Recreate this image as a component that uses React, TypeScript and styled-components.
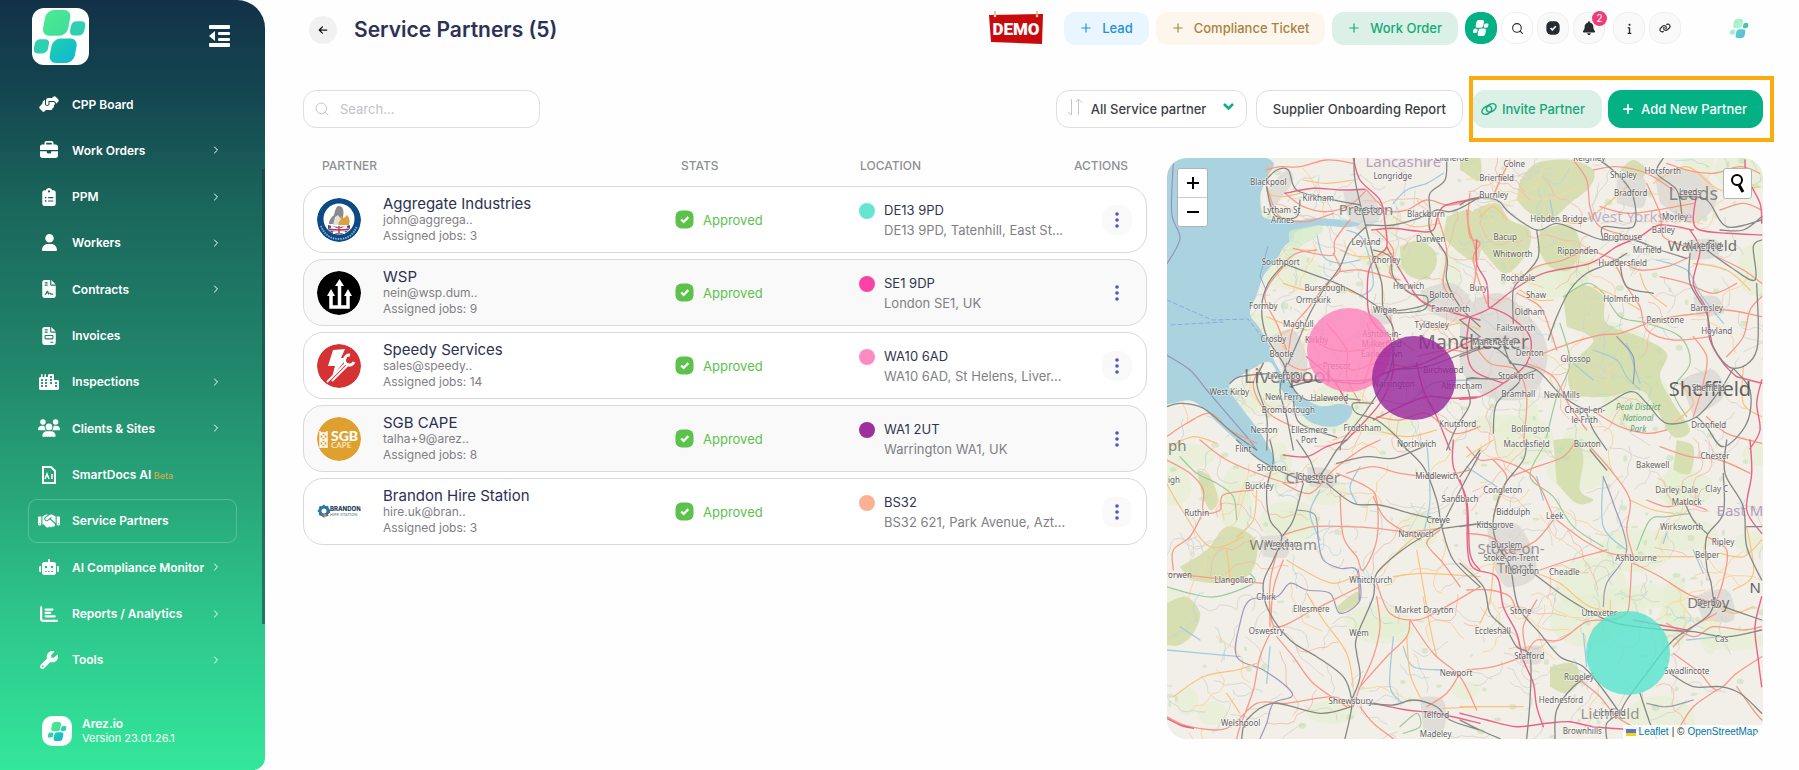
import React from "react";
import styled, { createGlobalStyle } from "styled-components";
import {
  FaArrowLeft, FaBell, FaBriefcase, FaChartBar, FaCity, FaClipboardList, FaFileContract,
  FaFileInvoice, FaHandshake, FaHandshakeAngle, FaInfo, FaLink, FaRobot, FaUser, FaUsers, FaWrench,
} from "react-icons/fa6";
import { ChevronRight, Plus, Search } from "lucide-react";

const Global = createGlobalStyle`
  *, *::before, *::after { box-sizing: border-box; }
  body { margin: 0; background: #fefefe; color: #2b3152; font-family: "Inter", "Liberation Sans", sans-serif; font-size: 13px; }
  button, input, select { font: inherit; color: inherit; }
  button { cursor: pointer; padding: 0; border: 0; background: none; }
  a { color: inherit; text-decoration: none; }
  svg { display: block; flex: none; }
`;

/* ---------- shell ---------- */

const Shell = styled.div`
  display: flex;
  min-height: 100vh;
`;

const Sidebar = styled.aside`
  position: relative;
  flex: none;
  display: flex;
  flex-direction: column;
  width: 265px;
  padding: 8px 28px 24px;
  color: #fff;
  border-radius: 0 28px 12px 0;
  background: linear-gradient(180deg, #123148 0%, #144650 12%, #1a655b 26%, #21876b 48%, #28a77a 65%, #2dc48a 79%, #33e79b 100%);
`;

const ScrollThumb = styled.span`
  position: absolute;
  top: 22%;
  bottom: 19%;
  right: 0;
  width: 3px;
  background: rgba(20, 60, 60, 0.55);
`;

const SideTop = styled.div`
  display: flex;
  align-items: center;
  justify-content: space-between;
  padding: 0 7px 0 4px;
  margin-bottom: 17px;
`;

const LogoTile = styled.span<{ $size: number; $radius: number }>`
  display: grid;
  place-items: center;
  flex: none;
  width: ${(p) => p.$size}px;
  height: ${(p) => p.$size}px;
  border-radius: ${(p) => p.$radius}px;
  background: #fff;
`;

const Nav = styled.nav`
  flex: 1;
  display: flex;
  flex-direction: column;
  justify-content: space-between;
`;

const NavItem = styled.a<{ $active?: boolean }>`
  display: grid;
  grid-template-columns: 22px 1fr 12px;
  align-items: center;
  column-gap: 12px;
  height: 44px;
  padding: 0 14px 0 9px;
  border: 1px solid ${(p) => (p.$active ? "rgba(255,255,255,.22)" : "transparent")};
  border-radius: 9px;
  font-size: 12px;
  font-weight: 600;
  white-space: nowrap;
`;

const NavIcon = styled.span`
  display: grid;
  place-items: center;
`;

const NavLabel = styled.span`
  width: 0;
`;

const Beta = styled.small`
  font-size: 9px;
  font-weight: 500;
  color: #d9ab45;
`;

const SideFoot = styled.div`
  display: flex;
  align-items: center;
  gap: 10px;
  margin-top: 34px;
  padding-left: 14px;
  font-size: 11px;
  line-height: 15px;
`;

const FootName = styled.strong`
  display: block;
  font-size: 12px;
  font-weight: 600;
`;

const Main = styled.main`
  flex: 1;
  min-width: 0;
  display: flex;
  flex-direction: column;
  padding: 11px 36px 31px 38px;
`;

/* ---------- header ---------- */

const Header = styled.header`
  display: flex;
  align-items: center;
  height: 34px;
  margin-bottom: 45px;
`;

const PageHeading = styled.div`
  flex: 1;
  display: flex;
  align-items: center;
  gap: 17px;
  padding: 3px 0 0 6px;
`;

const BackButton = styled.button`
  display: grid;
  place-items: center;
  width: 28px;
  height: 28px;
  border-radius: 50%;
  background: #f1f1f1;
  color: #111;
`;

const Title = styled.h1`
  margin: 0;
  font-size: 21px;
  line-height: 28px;
  font-weight: 600;
  color: #2c3157;
`;

const HeaderGroup = styled.div<{ $gap: number }>`
  display: flex;
  align-items: center;
  gap: ${(p) => p.$gap}px;
`;

const tones = {
  blue: ["#e9f5ff", "#1e90dc"],
  sand: ["#fdf6ed", "#a9823f"],
  green: ["#dbf0e6", "#10ab79"],
};

const Pill = styled.button<{ $tone: keyof typeof tones }>`
  display: flex;
  align-items: center;
  gap: 9px;
  height: 33px;
  padding: 0 16px 0 15px;
  border-radius: 12px;
  font-weight: 500;
  white-space: nowrap;
  background: ${(p) => tones[p.$tone][0]};
  color: ${(p) => tones[p.$tone][1]};
`;

const IconButton = styled.button<{ $kind?: "brand" | "plain"; $apart?: boolean }>`
  position: relative;
  display: grid;
  place-items: center;
  width: 32px;
  height: 32px;
  margin-left: ${(p) => (p.$apart ? 4 : 0)}px;
  border-radius: 14px;
  border: 1px solid ${(p) => (p.$kind === "brand" ? "#04b184" : "#efefef")};
  background: ${(p) => (p.$kind === "brand" ? "#04b184" : p.$kind === "plain" ? "#fff" : "#f9f9f9")};
  color: #262b2f;
`;

const Badge = styled.span`
  position: absolute;
  top: -2px;
  right: -3px;
  width: 15px;
  height: 15px;
  border-radius: 50%;
  background: #ee3d74;
  color: #fff;
  font-size: 10px;
  line-height: 15px;
`;

const UserMark = styled.a`
  margin: 0 14px 0 49px;
`;

/* ---------- toolbar ---------- */

const Toolbar = styled.div`
  display: flex;
  align-items: center;
  height: 38px;
  margin-bottom: 30px;
`;

const SearchBox = styled.label`
  display: flex;
  align-items: center;
  gap: 10px;
  width: 237px;
  height: 38px;
  padding: 0 10px;
  border: 1px solid #dedede;
  border-radius: 13px;
  background: #fff;
  color: #c4c4c8;
`;

const SearchInput = styled.input`
  flex: 1;
  min-width: 0;
  border: 0;
  padding: 0;
  outline: 0;
  background: transparent;
  color: #333;
  &::placeholder { color: #c2c2c6; opacity: 1; }
`;

const ToolGroup = styled.div`
  display: flex;
  gap: 9px;
  margin-left: auto;
`;

const SelectBox = styled.label`
  position: relative;
  display: block;
`;

const SelectLead = styled.span`
  position: absolute;
  left: 11px;
  top: 8px;
  pointer-events: none;
`;

const SelectChevron = styled.span`
  position: absolute;
  right: 13px;
  top: 13px;
  pointer-events: none;
`;

const FilterSelect = styled.select`
  appearance: none;
  width: 191px;
  height: 38px;
  padding: 0 30px 0 34px;
  border: 1px solid #dedede;
  border-radius: 13px;
  background: #fff;
  font-weight: 500;
  color: #3b3f46;
`;

const ToolButton = styled.button<{ $look: "outline" | "soft" | "solid" }>`
  display: flex;
  align-items: center;
  gap: ${(p) => (p.$look === "soft" ? 5 : 6)}px;
  height: 38px;
  padding: ${(p) => (p.$look === "soft" ? "0 16px 0 8px" : p.$look === "solid" ? "0 15px 0 12px" : "0 16px")};
  border-radius: 13px;
  font-weight: 500;
  white-space: nowrap;
  border: 1px solid ${(p) => ({ outline: "#dedede", soft: "#dbf0e6", solid: "#04b184" })[p.$look]};
  background: ${(p) => ({ outline: "#fff", soft: "#dbf0e6", solid: "#04b184" })[p.$look]};
  color: ${(p) => ({ outline: "#3b3f46", soft: "#16a67a", solid: "#fff" })[p.$look]};
`;

const Highlighted = styled.div`
  position: relative;
  display: flex;
  gap: 6px;
  &::after {
    content: "";
    position: absolute;
    inset: -14px -11px -14px -3px;
    border: 4px solid #fbab0c;
    pointer-events: none;
  }
`;

/* ---------- table ---------- */

const Content = styled.div`
  flex: 1;
  display: grid;
  grid-template-columns: minmax(0, 844fr) minmax(0, 596fr);
  gap: 20px;
`;

const Table = styled.table`
  display: block;
`;

const Head = styled.thead`
  display: block;
`;

const HeadRow = styled.tr`
  display: grid;
  grid-template-columns: 359fr 179fr 195fr 92px;
  height: 28px;
  padding: 0 0 0 19px;
`;

const HeadCell = styled.th<{ $end?: boolean }>`
  padding: 0;
  padding-right: ${(p) => (p.$end ? 19 : 0)}px;
  text-align: ${(p) => (p.$end ? "right" : "left")};
  font-size: 12px;
  line-height: 16px;
  font-weight: 500;
  color: #8e9094;
`;

const Body = styled.tbody`
  display: grid;
  gap: 6px;
`;

const Row = styled.tr<{ $shade: boolean }>`
  display: grid;
  grid-template-columns: 358fr 184fr 195fr 92px;
  align-items: center;
  height: 67px;
  padding-left: 13px;
  border: 1px solid #d9d9da;
  border-radius: 20px;
  background: ${(p) => (p.$shade ? "#f9f9f9" : "#fff")};
`;

const Cell = styled.td<{ $end?: boolean }>`
  display: flex;
  align-items: center;
  justify-content: ${(p) => (p.$end ? "flex-end" : "flex-start")};
  gap: 9px;
  min-width: 0;
  padding: 0 ${(p) => (p.$end ? 14 : 0)}px 0 0;
`;

const Avatar = styled.span`
  flex: none;
  width: 44px;
  height: 44px;
  margin-right: 13px;
  border-radius: 50%;
  overflow: hidden;
`;

const PartnerName = styled.div`
  font-size: 15px;
  line-height: 17px;
  color: #2b3152;
`;

const Muted = styled.div<{ $size: number; $line: number }>`
  font-size: ${(p) => p.$size}px;
  line-height: ${(p) => p.$line}px;
  color: #7f8084;
  white-space: nowrap;
`;

const Approved = styled.span`
  color: #5cc24c;
  line-height: 20px;
`;

const Dot = styled.span<{ $color: string }>`
  flex: none;
  align-self: flex-start;
  width: 16px;
  height: 16px;
  margin-top: 3px;
  border-radius: 50%;
  background: ${(p) => p.$color};
`;

const Place = styled.div`
  line-height: 20px;
  color: #2f3550;
`;

const MoreButton = styled.button`
  display: grid;
  place-items: center;
  width: 30px;
  height: 30px;
  border-radius: 12px;
  background: #f9f9f9;
`;

/* ---------- map ---------- */

const MapPanel = styled.section`
  position: relative;
  min-height: 400px;
  border-radius: 20px;
  overflow: hidden;
  background: #f1efe6;
`;

const MapSvg = styled.svg`
  position: absolute;
  inset: 0;
  width: 100%;
  height: 100%;
`;

const ZoomControl = styled.div`
  position: absolute;
  top: 10px;
  left: 10px;
  width: 31px;
  border: 1px solid #a9b4b4;
  border-radius: 3px;
  background: #fff;
  overflow: hidden;
`;

const ZoomButton = styled.button`
  display: grid;
  place-items: center;
  width: 100%;
  height: 28px;
  color: #000;
  & + & { border-top: 1px solid #ccc; height: 29px; }
`;

const MapSearch = styled.button`
  position: absolute;
  top: 10px;
  right: 11px;
  display: grid;
  place-items: center;
  width: 29px;
  height: 31px;
  border: 1px solid #b5b5b0;
  border-radius: 3px;
  background: #fff;
`;

const Attribution = styled.div`
  position: absolute;
  right: 0;
  bottom: 0;
  display: flex;
  align-items: center;
  gap: 3px;
  height: 14px;
  padding: 0 5px 0 3px;
  background: rgba(255, 255, 255, 0.8);
  font: 10px/14px "Liberation Sans", sans-serif;
  color: #333;
`;

const AttributionLink = styled.a`
  color: #0078a8;
`;

/* ---------- drawings ---------- */

function Mark({ size, mono, soft }: { size: number; mono?: boolean; soft?: boolean }) {
  const id = soft ? "markSoft" : "mark";
  return (
    <svg width={size} height={size} viewBox="0 0 160 160" aria-hidden="true">
      <defs>
        <linearGradient id={id + "a"} x1="0" y1="0" x2="1" y2="1">
          <stop offset="0" stopColor={soft ? "#9ff0c8" : "#4bea92"} />
          <stop offset="1" stopColor={soft ? "#b5f3d2" : "#3fdd9b"} />
        </linearGradient>
        <linearGradient id={id + "b"} x1="0" y1="0" x2="1" y2="1">
          <stop offset="0" stopColor={soft ? "#5fd0c8" : "#1ecfae"} />
          <stop offset="1" stopColor={soft ? "#56bdd6" : "#12b6d6"} />
        </linearGradient>
      </defs>
      <g transform="skewX(-11)">
        <rect x="38" y="0" width="76" height="78" rx="23" fill={mono ? "#fff" : `url(#${id}a)`} />
        <rect x="121" y="34" width="43" height="43" rx="14" fill={mono ? "#fff" : soft ? "#4fc0a8" : "#2fd0b1"} />
        <rect x="22" y="88" width="43" height="43" rx="14" fill={mono ? "#fff" : soft ? "#a5efd0" : "#2fd0b1"} />
        <rect x="74" y="86" width="76" height="74" rx="23" fill={mono ? "#fff" : `url(#${id}b)`} />
      </g>
    </svg>
  );
}

const CollapseIcon = () => (
  <svg width="21" height="23" viewBox="0 0 21 23" fill="#fff" aria-hidden="true">
    <rect width="21" height="4" rx="1" />
    <rect x="9" y="7" width="12" height="3" rx="1" />
    <rect x="9" y="13" width="12" height="3" rx="1" />
    <rect y="18" width="21" height="4" rx="1" />
    <path d="M6 6v10L0 11z" />
  </svg>
);

const SmartDocIcon = () => (
  <svg width="14" height="18" viewBox="0 0 14 18" fill="none" stroke="#fff" strokeWidth="2" aria-hidden="true">
    <path d="M1 1h8l4 4v12H1z" />
    <path d="M3 13l2-5 2 5M10 8v5" strokeWidth="1.5" />
  </svg>
);

const DemoSign = () => (
  <svg width="55" height="34" viewBox="0 0 55 34" role="img" aria-label="DEMO">
    <path d="M0 4l54-1-1 30L2 31z" fill="#c90a0c" />
    <path d="M6 0v5M48 0v5" stroke="#e6b26a" strokeWidth="1.5" />
    <circle cx="6" cy="5" r="1.3" fill="#f5d9a0" />
    <circle cx="48" cy="5" r="1.3" fill="#f5d9a0" />
    <text x="27" y="24" textAnchor="middle" fontFamily="Roboto" fontWeight="900" fontSize="17" fill="#fff">DEMO</text>
  </svg>
);

const SquareCheck = ({ size, color }: { size: number; color: string }) => (
  <svg width={size} height={size} viewBox="0 0 20 20" aria-hidden="true">
    <rect x="0.5" y="0.5" width="19" height="19" rx="6.5" fill={color} />
    <path d="M6.5 10l2.6 2.6L14 7.5" fill="none" stroke="#fff" strokeWidth="2.4" />
  </svg>
);

const SortIcon = () => (
  <svg width="16" height="18" viewBox="0 0 16 18" fill="none" stroke="#c3c6c8" aria-hidden="true">
    <path d="M4.5 1v16M1 14l3.5 3M11.500 17V1l4 4M4.500 17V17M11.500 1L9 4" />
  </svg>
);

const ChainIcon = () => (
  <svg width="16" height="14" viewBox="0 0 16 14" fill="none" stroke="#16a67a" strokeWidth="1.5" aria-hidden="true">
    <ellipse cx="5.800" cy="8.200" rx="5.200" ry="3.600" transform="rotate(-32 5.800 8.200)" />
    <ellipse cx="10.200" cy="5.800" rx="5.200" ry="3.600" transform="rotate(-32 10.200 5.800)" />
  </svg>
);

const AggregateLogo = () => (
  <svg width="44" height="44" viewBox="0 0 44 44" aria-hidden="true">
    <circle cx="22" cy="22" r="22" fill="#0c4a86" />
    <circle cx="22" cy="21" r="15.500" fill="#fff" />
    <path d="M22 8c5 0 5 7 4 11l-5 7H12c0-5 3-7 5-9 1-4 2-9 5-9z" fill="#8b8b8d" />
    <path d="M21 27l3-9 3 2 3-3c3 3 3 7 2 10z" fill="#d9a23f" />
    <path d="M18 19l3-2 3 4-4 6h-4z" fill="#e4e2df" />
    <path d="M11 27q11 4 22 0v3q-3 6-11 6T11 31z" fill="#3d4f9a" />
    <path d="M12 31q10 2 20 0M22 28v8M14 29l14 6M30 29l-14 6" stroke="#fff" strokeWidth="2.500" />
    <path d="M12 31q10 2 20 0M22 28v8" stroke="#d42a3c" strokeWidth="1.500" fill="none" />
    <path d="M4 28q5 13 18 13t18-13" fill="none" stroke="#8fb0d0" strokeWidth="1.800" strokeDasharray="1.500 1" />
  </svg>
);

const WspLogo = () => (
  <svg width="44" height="44" viewBox="0 0 44 44" aria-hidden="true">
    <circle cx="22" cy="22" r="22" fill="#000" />
    <path d="M14 24v12h17V24M22.500 36V14" fill="none" stroke="#fff" strokeWidth="3.500" />
    <path d="M22.500 8l4.500 7h-9zM14 18l4 7h-8zM31 18l4 7h-8z" fill="#fff" />
    <path d="M18.500 25v8M26.500 25v8" stroke="#000" strokeWidth="2" />
  </svg>
);

const SpeedyLogo = () => (
  <svg width="44" height="44" viewBox="0 0 44 44" aria-hidden="true">
    <circle cx="22" cy="22" r="22" fill="#d63233" />
    <path d="M16 6l12-1-4 9h6L15 33l3-11h-7z" fill="#fff" />
    <path d="M10 38l19-19M15 37l17-17" stroke="#fff" strokeWidth="1.800" />
    <path d="M33 11a5 5 0 1 0 4 7" fill="none" stroke="#fff" strokeWidth="3" />
  </svg>
);

const SgbLogo = () => (
  <svg width="44" height="44" viewBox="0 0 44 44" aria-hidden="true">
    <circle cx="22" cy="22" r="22" fill="#dfa02f" />
    <path d="M3 14v17M10 14v17M3 16h7M3 23h7M3 30h7M3 16l7 7-7 7M10 16l-7 7 7 7" stroke="#fff" strokeWidth="1.300" fill="none" />
    <text x="14" y="24" fontFamily="Lato" fontWeight="900" fontSize="14" fill="#fff">SGB</text>
    <text x="14" y="31" fontFamily="Lato" fontWeight="700" fontSize="8" fill="#f7e3bd">CAPE</text>
  </svg>
);

const BrandonLogo = () => (
  <svg width="44" height="44" viewBox="0 0 44 44" aria-hidden="true">
    <circle cx="7" cy="21" r="4" fill="none" stroke="#2877a6" strokeWidth="3" />
    <circle cx="7" cy="21" r="5.500" fill="none" stroke="#2877a6" strokeWidth="1.500" strokeDasharray="2 2" />
    <path d="M6 23l4 2-3 3z" fill="#f07a2c" />
    <text x="13" y="21" fontFamily="Inter" fontWeight="800" fontSize="6" fill="#23405c">BRANDON</text>
    <text x="13" y="26" fontFamily="Inter" fontWeight="500" fontSize="4" fill="#7b8b9a">HIRE STATION</text>
  </svg>
);

/* ---------- map artwork ---------- */

type Quad = "a" | "b" | "c" | "d";
// Each quadrant of the map is surveyed on its own grid, three units to the pixel.
const origin: Record<Quad, [number, number]> = { a: [-21, -24], b: [879, -24], c: [-21, 846], d: [879, 846] };

function place(q: Quad, x: number, y: number): [number, number] {
  return [Math.round(((x + origin[q][0]) / 3) * 10) / 10, Math.round(((y + origin[q][1]) / 3) * 10) / 10];
}

function trace(q: Quad, src: string, closed = false) {
  const n = src.trim().split(/[ ,]+/).map(Number);
  const p: [number, number][] = [];
  for (let i = 0; i < n.length; i += 2) p.push(place(q, n[i], n[i + 1]));
  let d = `M${p[0][0]} ${p[0][1]}`;
  for (let i = 0; i < p.length - 1; i++) {
    const a = p[Math.max(0, i - 1)], b = p[i], c = p[i + 1], e = p[Math.min(p.length - 1, i + 2)];
    d += `C${[b[0] + (c[0] - a[0]) / 6, b[1] + (c[1] - a[1]) / 6, c[0] - (e[0] - b[0]) / 6, c[1] - (e[1] - b[1]) / 6, c[0], c[1]].map((v) => v.toFixed(1)).join(" ")}`;
  }
  return closed ? d + "Z" : d;
}

// Small repeatable number stream for the minor lanes and copses.
function stream(seed: number) {
  let s = seed;
  return () => ((s = (s * 16807) % 2147483647) / 2147483647);
}

function wander(rand: () => number, count: number, steps: number, reach: number) {
  let d = "";
  for (let i = 0; i < count; i++) {
    let x = rand() * 596, y = rand() * 581, dir = rand() * 6.28;
    d += `M${x.toFixed(0)} ${y.toFixed(0)}`;
    for (let k = 0; k < steps; k++) {
      dir += (rand() - 0.5) * 1.7;
      x += Math.cos(dir) * reach;
      y += Math.sin(dir) * reach;
      d += `L${x.toFixed(1)} ${y.toFixed(1)}`;
    }
  }
  return d;
}

const rnd = stream(4711);
const lanes = wander(rnd, 230, 7, 6);
const becks = wander(rnd, 70, 9, 4);
const amber = wander(rnd, 75, 9, 7);
const coral = wander(rnd, 50, 10, 7);
const copses = Array.from({ length: 260 }, () => [rnd() * 596, rnd() * 581, 1 + rnd() * 3, 1 + rnd() * 2.5]);
const meadows = Array.from({ length: 60 }, () => [rnd() * 596, rnd() * 581, 10 + rnd() * 26, 8 + rnd() * 20]);

const sea: [Quad, string][] = [
  ["a", "0,0 318,24 316,90 302,130 304,180 318,205 400,212 470,205 560,212 600,222 560,232 480,228 410,245 400,268 372,290 348,330 312,375 292,430 270,490 296,530 322,575 342,630 372,680 420,735 480,768 540,762 575,772 566,806 520,830 450,815 400,760 360,712 348,662 325,635 280,655 215,698 212,725 250,780 292,835 320,880 345,930 338,950 290,925 262,900 190,835 104,756 40,760 0,770"],
];
const upland: [Quad, string][] = [
  ["a", "720,290 770,272 822,300 828,350 790,388 740,372 722,330"],
  ["a", "920,24 960,24 960,90 930,80 905,60"],
  ["a", "860,200 930,180 960,230 955,330 900,310 850,260"],
  ["b", "180,90 230,40 330,30 400,60 390,110 330,160 270,210 210,190 170,150"],
  ["b", "40,180 110,160 150,210 210,240 200,310 140,370 90,330 40,260"],
  ["b", "240,240 330,225 360,290 330,360 270,350 235,300"],
  ["b", "310,440 370,405 430,440 440,520 540,560 620,610 600,680 640,760 690,840 640,860 590,780 540,720 440,740 340,730 330,650 400,570 320,530"],
  ["b", "480,60 520,30 560,60 540,90"],
  ["b", "0,30 50,40 30,70 0,60"],
  ["c", "20,490 80,470 120,520 100,580 60,615 20,615"],
  ["c", "60,380 140,330 200,260 280,290 290,350 260,410 180,430 90,420"],
  ["c", "110,90 150,110 175,180 150,210 125,160"],
  ["c", "530,500 590,455 595,490 540,520"],
  ["d", "280,0 350,0 370,60 360,150 400,180 350,190 290,130"],
  ["d", "650,0 700,20 690,100 640,90"],
  ["d", "270,680 340,670 360,720 320,760 270,740"],
];
const urban: [Quad, string][] = [
  ["a", "550,125 620,120 660,200 600,240 560,190"],
  ["a", "330,560 400,540 440,620 430,700 380,690"],
  ["a", "320,120 380,60 400,90 360,150 330,190"],
  ["a", "780,420 880,400 940,470 900,520 800,480"],
  ["a", "620,480 690,470 690,520 630,520"],
  ["b", "0,480 120,430 240,540 260,640 210,740 80,740 0,660"],
  ["b", "580,60 720,70 770,150 700,220 600,160"],
  ["b", "470,80 550,80 550,170 470,160"],
  ["b", "660,690 760,660 790,740 700,800"],
  ["b", "680,270 770,270 770,320 690,330"],
  ["b", "700,440 770,440 790,490 710,500"],
  ["c", "440,80 510,90 520,140 450,140"],
  ["c", "300,290 380,290 380,350 310,350"],
  ["c", "780,770 850,780 850,870 790,870"],
  ["d", "80,250 180,260 230,400 140,440 90,350"],
  ["d", "700,470 800,450 820,540 730,540"],
  ["d", "180,620 240,620 240,670 180,670"],
];
const coralRoads: [Quad, string][] = [
  ["a", "318,60 360,50 420,50 500,30 580,40"], ["a", "320,110 345,180 370,205 440,215 520,190"],
  ["a", "375,130 430,170 500,185 570,165 620,120"], ["a", "400,295 460,310 520,315 525,270 570,210"],
  ["a", "370,340 410,310 470,300"], ["a", "375,345 330,400 315,450 350,520 380,600"],
  ["a", "520,310 540,360 500,400 440,480 400,530 385,610"], ["a", "540,365 600,360 680,380 720,390"],
  ["a", "620,120 680,180 740,180 800,150 870,165 960,140"], ["a", "650,240 700,300 690,370 740,420 820,470 900,490"],
  ["a", "830,190 860,300 850,400 880,450"], ["a", "930,130 925,220 950,320 940,420"],
  ["a", "380,640 430,660 500,640 580,660 650,640 740,650"], ["a", "440,560 520,600 600,600 700,570"],
  ["a", "500,520 560,600 560,680 600,760"], ["a", "620,520 640,600 610,700"],
  ["a", "310,640 280,700 300,760 340,800 400,830"], ["a", "650,800 720,810 800,790 880,850 960,830"],
  ["a", "20,860 80,820 150,790 210,840 290,880"], ["a", "770,620 860,600 930,610"], ["a", "690,500 710,560 760,600"],
  ["b", "20,180 30,260 60,280 40,330 80,460"], ["b", "150,30 120,90 100,140"], ["b", "340,30 380,90 390,170 420,230 510,260"],
  ["b", "400,60 470,50 560,70 640,120"], ["b", "420,170 500,190 590,180 700,160"], ["b", "160,400 230,350 310,330 390,290"],
  ["b", "170,430 240,470 270,540 290,600"], ["b", "250,610 330,580 420,555 480,550 560,520"],
  ["b", "390,300 470,330 540,360 620,350 690,320"], ["b", "470,350 500,410 540,470 560,540 640,570 750,560"],
  ["b", "560,520 640,500 720,490 800,480 905,500"], ["b", "770,320 850,360 905,400"], ["b", "600,380 680,400 760,430 830,400"],
  ["b", "700,560 740,620 730,700 700,800"], ["b", "620,40 680,60 760,70 840,50 900,70"], ["b", "200,640 280,680 330,770 380,840"],
  ["b", "410,790 480,830 560,850 620,840"], ["b", "740,800 800,850 905,880"], ["b", "560,100 600,190 610,260 680,290"],
  ["b", "40,580 90,640 170,660 200,740 190,880"], ["b", "800,620 850,560 870,480 905,440"], ["b", "780,180 850,160 905,180"],
  ["c", "120,0 200,60 320,110 400,130 480,100"], ["c", "20,60 90,100 130,150 130,215 180,210 190,165 280,150"],
  ["c", "370,130 450,160 520,90 600,30 660,0"], ["c", "530,100 620,140 650,180 650,300 610,390 590,350 550,290 540,160"],
  ["c", "560,100 640,80 720,100 830,110 930,90"], ["c", "370,285 460,260 560,260 650,265 740,275 840,265"],
  ["c", "130,215 90,290 40,330 40,390"], ["c", "20,400 120,410 210,420 310,430"], ["c", "350,340 330,430 330,560"],
  ["c", "370,360 340,450 345,560 460,510 540,470 600,440"], ["c", "340,560 300,650 280,750 240,860 230,896"],
  ["c", "350,590 400,650 460,730 560,800"], ["c", "650,430 690,520 770,540 840,510 960,440"],
  ["c", "650,470 660,560 640,650 600,740 580,800"], ["c", "600,740 680,650 740,590 750,540"], ["c", "750,540 820,640 900,710 950,810"],
  ["c", "840,270 800,310 850,370 900,440"], ["c", "20,830 90,860 200,865 290,790 380,790 520,770 570,800"],
  ["c", "600,800 640,850 700,896"], ["c", "900,700 860,760 800,800"], ["c", "780,300 680,240 640,170"],
  ["d", "100,60 140,110 120,170 100,230"], ["d", "150,110 230,80 310,50 350,0"], ["d", "20,20 60,60 120,60 220,110 280,230"],
  ["d", "280,240 230,300 170,330 110,350"], ["d", "390,20 460,100 510,180 500,270 520,350"], ["d", "290,240 370,300 450,340 520,345"],
  ["d", "520,370 600,410 680,460 760,490"], ["d", "515,370 510,460 500,520 450,540 380,545 300,600 230,600 200,640"],
  ["d", "240,390 330,360 440,330"], ["d", "20,280 90,290 140,330"], ["d", "600,20 690,50 780,60 870,100"], ["d", "560,180 620,200 680,190 740,210"],
  ["d", "620,550 700,590 760,560 850,570 905,560"], ["d", "740,290 800,330 790,420 770,480"], ["d", "640,640 720,700 770,750 830,700 905,650"],
  ["d", "770,750 700,800 660,860"], ["d", "20,690 100,680 190,650"], ["d", "360,720 420,770 470,830 540,870"], ["d", "830,740 880,810 905,840"],
  ["d", "770,520 700,560 640,620"], ["d", "20,450 90,450 150,470 170,520"], ["d", "230,480 190,560 200,640"],
];
const motorways: [Quad, string][] = [
  ["a", "375,130 460,115 540,120 615,118"], ["a", "580,24 600,90 660,150 675,220 680,290 650,320 625,370 625,480 650,530 690,560"],
  ["a", "635,240 700,235 770,243 820,240 850,170 960,145"], ["a", "680,290 720,360 780,450 850,480 960,510"],
  ["a", "400,690 500,690 620,690 700,660 790,640 960,560"], ["a", "690,560 700,660 660,760 560,870"],
  ["a", "640,810 720,770 800,740 870,745 960,740"], ["a", "440,620 520,690 560,760"], ["a", "770,640 790,720 830,800 870,900"],
  ["b", "50,270 50,340 80,400 85,470"], ["b", "0,510 80,480 160,420 250,370 390,340 470,290 540,260 600,225 700,240"],
  ["b", "85,470 150,500 210,560 200,640 130,700 60,740 0,748"], ["b", "690,240 720,300 700,400 740,480 750,570 790,640 830,680"],
  ["b", "710,130 700,210 720,240 800,250 905,255"], ["b", "855,30 860,80 900,160 905,220"], ["b", "905,690 890,760 900,840 870,896"],
  ["b", "830,680 905,700"], ["b", "30,500 20,580 40,660 130,700"],
  ["c", "880,0 880,80 920,180 930,340 960,390"], ["c", "370,45 440,50 500,20 560,0"], ["c", "640,790 740,810 830,820 960,850"], ["c", "20,835 60,855 100,865"],
  ["d", "0,120 20,200 30,370 110,410 130,500 170,580 190,660 220,730 230,800 250,860"], ["d", "870,0 875,100 860,210 905,280"],
  ["d", "0,820 80,840 170,860 260,850 330,845 400,860 540,870"], ["d", "520,540 600,555 680,570"], ["d", "905,470 885,560 895,660 905,740"],
];
const rails: [Quad, string][] = [
  ["a", "318,90 350,60 385,60 410,120 500,145 600,165"], ["a", "320,110 330,160 350,200 410,200 420,150"],
  ["a", "583,24 585,90 615,220 640,320 665,400 670,480 700,540 690,660 620,780 550,870 540,900"],
  ["a", "618,230 570,280 540,350 490,420 450,490 420,560 385,640"], ["a", "370,340 450,370 530,400 600,435 680,480 780,470 830,440"],
  ["a", "370,345 325,400 305,470 320,560 370,640 390,700 440,750 540,745 600,750"], ["a", "618,225 700,225 790,200 830,180 870,185 910,170 960,140"],
  ["a", "860,24 855,90 810,130 810,180 810,240 860,320 860,390 900,470 960,530"], ["a", "640,300 690,320 700,380 750,430 800,440 790,480 700,490"],
  ["a", "390,710 480,690 600,700 700,660 800,650 960,590"], ["a", "210,700 240,680 330,670"], ["a", "310,640 290,700 320,800 320,900"],
  ["a", "380,640 360,720 380,800 400,900"], ["a", "400,750 420,820 530,862"], ["a", "20,770 60,760 130,775 220,850 290,900"],
  ["a", "640,760 580,760 590,790 650,810 720,870 740,900"], ["a", "860,900 890,830 930,760 920,690 960,685"],
  ["b", "0,165 40,145 110,150 150,190 230,240 290,220 360,245 430,270 520,270 600,300 680,325"],
  ["b", "230,240 235,320 190,380 160,420 160,520"], ["b", "265,570 290,500 330,420 380,370 450,340 500,310"],
  ["b", "420,30 480,80 520,140 520,230 430,230 430,270"], ["b", "610,24 590,70 650,120 665,190"], ["b", "660,140 740,150 800,230 905,210"],
  ["b", "905,270 880,290 885,390 810,350 740,300"], ["b", "690,310 690,400 740,490 760,590 820,655 890,600 890,400"],
  ["b", "480,340 500,410 580,430"], ["b", "820,655 780,720 710,800 620,820 560,760 510,725 400,780 310,740 230,660 150,640"],
  ["b", "20,685 150,685 230,660"], ["b", "140,620 180,690 110,760 100,850"], ["b", "380,790 400,840 440,900"], ["b", "820,655 870,720 860,820 790,890 740,830 710,800"],
  ["b", "150,640 120,570 70,570 0,560"], ["b", "0,620 90,590 140,620"], ["b", "0,510 60,560"], ["b", "780,240 850,240 905,200"],
  ["c", "330,0 340,60 320,150 330,240 365,290 340,360 310,430 325,510 390,600 470,650 550,710 575,780 570,830 555,896"],
  ["c", "365,290 400,240 430,130"], ["c", "410,0 450,60 475,110 530,30 560,0"], ["c", "500,130 580,190 660,195 750,220 840,240"],
  ["c", "720,10 790,80 830,180 845,260 880,360 960,440"], ["c", "845,260 740,320 650,400 640,470 590,590 590,640 600,710 575,780"],
  ["c", "845,260 890,170 960,40"], ["c", "530,70 620,50 700,55 790,20"], ["c", "620,790 700,795 760,780 830,800 870,840 960,870"],
  ["c", "245,896 260,840 340,790 480,820 575,800"], ["c", "230,0 300,60 400,110 480,130"], ["c", "850,265 960,250"],
  ["d", "200,0 190,60 130,140 100,240 110,310 150,380 175,500 240,580 300,650 370,680 430,750 480,820"],
  ["d", "0,260 80,250 100,270"], ["d", "0,370 70,440 90,520 140,570 170,620 210,650 210,780 200,896"], ["d", "220,400 300,460 380,510 470,550 620,570 700,575 800,590 905,570"],
  ["d", "285,896 290,810 340,740 400,700"], ["d", "800,0 795,100 850,200 860,320 905,420"], ["d", "790,100 790,220 740,290 740,380 755,440 750,520 640,600 560,700 500,780 480,820"],
  ["d", "860,260 905,260"], ["d", "540,760 570,850 590,896"], ["d", "630,700 700,740 780,740 840,760 905,820"], ["d", "790,500 905,540"],
  ["d", "390,30 440,90"], ["d", "675,190 700,240 740,280"], ["d", "440,896 440,850 480,820"], ["d", "0,840 60,870 120,896"], ["d", "0,110 60,30"],
];
const amberRoads: [Quad, string][] = [
  ["a", "330,40 320,120 360,140 420,130"], ["a", "430,90 500,100 580,90"], ["a", "370,400 440,420 520,410 610,440"], ["a", "540,300 600,320 700,310"],
  ["a", "320,500 370,520 440,540"], ["a", "700,200 760,230 840,220"], ["a", "820,540 900,520 960,540"], ["a", "640,570 700,600"], ["a", "380,610 360,560 390,540"],
  ["a", "30,890 100,860 170,880"], ["a", "520,870 620,840 740,860 830,840"],
  ["b", "180,420 230,450 280,450"], ["b", "60,200 100,170 140,210"], ["b", "270,200 350,220 420,180 500,110"], ["b", "540,370 560,420 620,470"],
  ["b", "540,480 470,440 400,410"], ["b", "580,100 680,50 780,120 900,110"], ["b", "700,340 800,360 870,420"], ["b", "850,650 850,760 905,800"], ["b", "640,820 700,760 660,700"],
  ["c", "20,130 60,200 150,320 250,290"], ["c", "200,330 210,420"], ["c", "290,150 280,240 230,290"], ["c", "380,360 430,390 520,430 600,400"], ["c", "440,460 490,540 560,640 580,740"],
  ["c", "700,410 790,400 960,410"], ["c", "770,330 790,440 810,560 830,650"], ["c", "650,400 730,320 790,270"], ["c", "740,590 750,700 780,770"], ["c", "40,770 130,710 230,690 290,670"], ["c", "850,805 960,800"], ["c", "200,760 240,820"],
  ["d", "0,800 190,800"], ["d", "230,400 300,430 390,500 500,520"], ["d", "510,180 580,210 640,220"], ["d", "530,350 700,350"], ["d", "100,380 90,480 60,550"], ["d", "780,340 850,350 905,300"], ["d", "860,260 880,400 820,450"], ["d", "760,490 820,520 880,500"], ["d", "20,50 100,0"],
];
const rivers: [Quad, string][] = [
  ["a", "470,250 490,320 540,340 600,330"], ["a", "700,160 740,120 800,100 850,70"], ["a", "560,240 610,270 640,400 600,440"], ["a", "670,750 740,760 820,700 930,690"],
  ["b", "270,150 280,200"], ["b", "590,330 680,360 720,430 790,520"], ["b", "400,600 470,630 500,680 540,720"], ["b", "500,580 520,640 540,700"], ["b", "340,640 400,690"],
  ["c", "20,630 130,640 240,650"], ["c", "480,150 450,220 480,300"], ["c", "600,80 570,140 590,190"], ["c", "730,620 760,680 850,690"], ["c", "800,0 810,180 790,280"], ["c", "320,730 330,620"], ["c", "700,590 690,740 730,790"],
  ["c", "120,600 60,560"], ["d", "20,80 110,140"], ["d", "430,110 430,260 500,330"], ["d", "230,110 250,180"], ["d", "700,330 730,400"], ["d", "370,580 380,680"], ["d", "620,280 610,310"], ["d", "680,600 780,590"],
];
const borders: [Quad, string][] = [
  ["a", "40,40 35,190 60,265 22,340"], ["a", "20,615 90,660 140,720 200,790 260,860 290,900"],
  ["c", "410,210 465,225 475,300 490,360 540,385 590,390 598,480"], ["c", "595,390 600,480 540,520 510,460 440,450 390,430 350,470 270,480 240,550 230,650 310,690 380,740 395,770 340,790 320,850 300,896"],
  ["d", "430,110 460,190 500,330 440,430 430,500"], ["b", "470,560 520,620 520,700"], ["d", "560,790 620,800 700,780"],
];
const parks: [Quad, string][] = [
  ["b", "310,440 380,400 430,430 480,500 560,520 660,560 690,640 640,720 680,800"],
  ["b", "300,520 330,640 290,740 260,860"],
  ["d", "250,20 210,110 280,170 340,260 430,320"], ["d", "530,330 570,240 620,230 690,220"],
  ["c", "20,440 90,460 170,470 280,430 270,400"], ["c", "60,50 110,100 170,130 220,170 230,240"],
  ["c", "720,860 770,820 780,860 730,880"],
];

const towns: [Quad, number, number, string][] = [
  ["a", 325, 104, "Blackpool"], ["a", 475, 154, "Kirkham"], ["a", 365, 188, "Lytham St"], ["a", 368, 218, "Annes"], ["a", 698, 88, "Longridge"], ["a", 625, 190, "Preston"], ["a", 798, 202, "Blackburn"],
  ["a", 618, 284, "Leyland"], ["a", 812, 276, "Darwen"], ["a", 678, 339, "Chorley"], ["a", 362, 345, "Southport"], ["a", 495, 422, "Burscough"], ["a", 460, 459, "Ormskirk"], ["a", 746, 417, "Horwich"], ["a", 845, 444, "Bolton"],
  ["a", 310, 476, "Formby"], ["a", 675, 488, "Wigan"], ["a", 872, 486, "Farnworth"], ["a", 415, 530, "Maghull"], ["a", 815, 534, "Tyldesley"], ["a", 340, 576, "Crosby"], ["a", 470, 580, "Kirkby"], ["a", 665, 560, "Ashton-in-"], ["a", 665, 590, "Makerfield"],
  ["a", 365, 622, "Bootle"], ["a", 665, 622, "Earlestown"], ["a", 530, 656, "Prescot"], ["a", 375, 686, "Liverpool"], ["a", 208, 734, "West Kirby"], ["a", 372, 750, "New Ferry"], ["a", 508, 752, "Halewood"], ["a", 385, 790, "Bromborough"],
  ["a", 312, 850, "Neston"], ["a", 448, 850, "Ellesmere"], ["a", 447, 880, "Port"], ["a", 607, 842, "Frodsham"], ["a", 893, 832, "Knutsford"], ["a", 905, 718, "Altrincham"], ["a", 700, 712, "Warrington"], ["a", 850, 670, "Birchwood"], ["a", 770, 892, "Northwich"],
  ["a", 875, 32, "Clitheroe"],
  ["b", 163, 50, "Colne"], ["b", 110, 94, "Brierfield"], ["b", 101, 144, "Burnley"], ["b", 388, 34, "Keighley"], ["b", 490, 83, "Shipley"], ["b", 608, 73, "Horsforth"], ["b", 512, 138, "Bradford"], ["b", 690, 134, "Leeds"],
  ["b", 296, 215, "Hebden Bridge"], ["b", 645, 210, "Morley"], ["b", 610, 248, "Batley"], ["b", 136, 269, "Bacup"], ["b", 488, 269, "Brighouse"], ["b", 353, 311, "Ripponden"], ["b", 562, 310, "Mirfield"], ["b", 158, 321, "Whitworth"],
  ["b", 730, 298, "Wakefield"], ["b", 488, 348, "Huddersfield"], ["b", 174, 392, "Rochdale"], ["b", 55, 424, "Bury"], ["b", 228, 445, "Shaw"], ["b", 484, 455, "Holmfirth"], ["b", 740, 482, "Barnsley"], ["b", 209, 496, "Oldham"], ["b", 616, 519, "Penistone"],
  ["b", 168, 543, "Failsworth"], ["b", 770, 553, "Hoyland"], ["b", 103, 584, "Manchester"], ["b", 209, 617, "Denton"], ["b", 347, 635, "Glossop"], ["b", 168, 686, "Stockport"], ["b", 175, 741, "Bramhall"], ["b", 305, 745, "New Mills"],
  ["b", 374, 790, "Chapel-en-"], ["b", 374, 818, "le-Frith"], ["b", 745, 724, "Sheffield"], ["b", 746, 834, "Dronfield"], ["b", 212, 846, "Bollington"], ["b", 200, 892, "Macclesfield"], ["b", 382, 892, "Buxton"],
  ["c", 250, 36, "Flint"], ["c", 335, 93, "Shotton"], ["c", 455, 120, "Chester"], ["c", 298, 148, "Buckley"], ["c", 110, 229, "Ruthin"], ["c", 830, 116, "Middlewich"], ["c", 900, 185, "Sandbach"], ["c", 835, 248, "Crewe"], ["c", 768, 292, "Nantwich"],
  ["c", 370, 322, "Wrexham"], ["c", 222, 429, "Llangollen"], ["c", 60, 414, "orwen"], ["c", 42, 128, "igh"], ["c", 318, 481, "Chirk"], ["c", 632, 429, "Whitchurch"], ["c", 454, 515, "Ellesmere"], ["c", 792, 519, "Market Drayton"], ["c", 319, 581, "Oswestry"], ["c", 597, 587, "Wem"],
  ["c", 888, 707, "Newport"], ["c", 572, 793, "Shrewsbury"], ["c", 828, 834, "Telford"], ["c", 242, 859, "Welshpool"], ["c", 827, 892, "Madeley"],
  ["d", 765, 57, "Chester"], ["d", 578, 84, "Bakewell"], ["d", 128, 158, "Congleton"], ["d", 650, 160, "Darley Dale"], ["d", 770, 156, "Clay C"], ["d", 680, 194, "Matlock"], ["d", 160, 224, "Biddulph"], ["d", 284, 237, "Leek"], ["d", 105, 264, "Kidsgrove"],
  ["d", 665, 271, "Wirksworth"], ["d", 140, 323, "Burslem"], ["d", 153, 364, "Stoke-on-Trent"], ["d", 528, 362, "Ashbourne"], ["d", 742, 355, "Belper"], ["d", 190, 402, "Longton"], ["d", 313, 406, "Cheadle"], ["d", 745, 497, "Derby"], ["d", 182, 521, "Stone"],
  ["d", 418, 529, "Uttoxeter"], ["d", 98, 583, "Eccleshall"], ["d", 208, 656, "Stafford"], ["d", 785, 607, "Cas"], ["d", 357, 721, "Rugeley"], ["d", 680, 702, "Swadlincote"], ["d", 303, 788, "Hednesford"], ["d", 450, 827, "Lichfield"], ["d", 367, 883, "Brownhills"], ["d", 789, 316, "Ripley"],
];
const cities: [Quad, number, number, string, number, string][] = [
  ["a", 382, 700, "Liverpool", 20, "#5b5b5b"], ["a", 618, 195, "Preston", 15, "#666"], ["b", 40, 596, "Manchester", 20, "#555"], ["b", 700, 150, "Leeds", 18, "#666"],
  ["b", 727, 304, "Wakefield", 15, "#444"], ["b", 750, 738, "Sheffield", 20, "#333"], ["c", 458, 128, "Chester", 15, "#666"], ["c", 370, 331, "Wrexham", 15, "#666"],
  ["d", 153, 343, "Stoke-on-", 15, "#777"], ["d", 165, 400, "Trent", 15, "#777"], ["d", 745, 505, "Derby", 15, "#555"], ["d", 450, 836, "Lichfield", 15, "#777"],
  ["a", 730, 50, "Lancashire", 15, "#a583ae"], ["b", 540, 217, "West Yorkshire", 15, "#b79bbd"], ["d", 840, 228, "East M", 15, "#a583ae"], ["c", 52, 34, "ph", 15, "#666"],
  ["d", 886, 460, "N", 15, "#333"],
];

const strokes = (set: [Quad, string][]) => set.map(([q, s]) => trace(q, s)).join("");
const areas = (set: [Quad, string][]) => set.map(([q, s]) => trace(q, s, true)).join("");

const coverage: [number, number, string][] = [
  [182, 192, "#ff7fbb"],
  [247, 220, "#97249b"],
  [461, 495, "#55e3ce"],
];

const RegionMap = () => (
  <MapSvg viewBox="0 0 596 581" preserveAspectRatio="xMidYMid slice" role="img" aria-label="Partner coverage map">
    <rect width="596" height="581" fill="#f1efe8" />
    {meadows.map(([x, y, a, b], i) => <ellipse key={i} cx={x} cy={y} rx={a} ry={b} fill="#e4efcf" opacity=".6" />)}
    <path d={areas(upland)} fill="#d2dca8" opacity=".85" />
    {copses.map(([x, y, a, b], i) => <ellipse key={i} cx={x} cy={y} rx={a} ry={b} fill="#c2dfb1" opacity=".55" />)}
    <path d={areas(urban)} fill="#dcd8d3" opacity=".8" />
    <g fill="none" strokeLinejoin="round" strokeLinecap="round">
      <path d={lanes} stroke="#d4d2cc" strokeWidth=".8" />
      <path d={becks} stroke="#a9d4de" strokeWidth=".8" opacity=".8" />
      <path d={amber} stroke="#f9d6a0" strokeWidth="1" />
      <path d={coral} stroke="#f8b7a4" strokeWidth="1" opacity=".8" />
      <path d={strokes(parks)} stroke="#9ccb9b" strokeWidth="1.2" />
      <path d={strokes(rivers)} stroke="#9fcddd" strokeWidth="1.3" />
    </g>
    <path d={areas(sea)} fill="#aad3df" />
    <path d="M101 88L93 118l6 14" stroke="#93a9cf" fill="none" />
    <path d="M132 85q-12 14-16 25M126 76l26-5q-8 10-26 14z" fill="#d5eccb" stroke="#d5eccb" strokeWidth="8" strokeLinejoin="round" opacity=".75" />
    <g fill="none" strokeLinejoin="round" strokeLinecap="round">
      <path d={strokes(borders)} stroke="#9488b2" strokeWidth="1.2" opacity=".85" />
      <path d={strokes(amberRoads)} stroke="#fbc27c" strokeWidth="1.2" />
      <path d={strokes(coralRoads)} stroke="#f89a88" strokeWidth="1.3" />
      <path d={strokes(motorways)} stroke="#ea6386" strokeWidth="1.4" />
      <path d={strokes(rails)} stroke="#868885" strokeWidth="1.3" />
      <path d="M0 142L45 162l36-1 22 28M4 167l52-3" stroke="#8fa6e0" strokeDasharray="4 3" />
    </g>
    <g textAnchor="middle" fontFamily="Noto Sans">
      {cities.map(([q, x, y, t, s, c], i) => {
        const [px, py] = place(q, x, y);
        return <text key={i} x={px} y={py} fontSize={s} fill={c} opacity=".75">{t}</text>;
      })}
      {towns.map(([q, x, y, t], i) => {
        const [px, py] = place(q, x, y);
        return <text key={i} x={px} y={py} fontSize="8" fill="#63615f" stroke="#fff" strokeOpacity=".5" strokeWidth="1.500" paintOrder="stroke">{t}</text>;
      })}
      <g fontSize="8" fontStyle="italic" fill="#62a077">
        <text x="471" y="252">Peak District</text>
        <text x="471" y="263">National</text>
        <text x="471" y="274">Park</text>
      </g>
    </g>
    {coverage.map(([x, y, c]) => <circle key={c} cx={x} cy={y} r="42" fill={c} opacity=".8" />)}
  </MapSvg>
);

/* ---------- data ---------- */

const navItems: { label: string; icon: React.ReactNode; more?: boolean; active?: boolean; beta?: boolean }[] = [
  { label: "CPP Board", icon: <FaHandshakeAngle size={20} /> },
  { label: "Work Orders", icon: <FaBriefcase size={18} />, more: true },
  { label: "PPM", icon: <FaClipboardList size={18} />, more: true },
  { label: "Workers", icon: <FaUser size={17} />, more: true },
  { label: "Contracts", icon: <FaFileContract size={18} />, more: true },
  { label: "Invoices", icon: <FaFileInvoice size={18} /> },
  { label: "Inspections", icon: <FaCity size={20} />, more: true },
  { label: "Clients & Sites", icon: <FaUsers size={22} />, more: true },
  { label: "SmartDocs AI", icon: <SmartDocIcon />, beta: true },
  { label: "Service Partners", icon: <FaHandshake size={22} />, active: true },
  { label: "AI Compliance Monitor", icon: <FaRobot size={20} />, more: true },
  { label: "Reports / Analytics", icon: <FaChartBar size={18} />, more: true },
  { label: "Tools", icon: <FaWrench size={18} />, more: true },
];

const partners = [
  { name: "Aggregate Industries", mail: "john@aggrega..", jobs: 3, code: "DE13 9PD", place: "DE13 9PD, Tatenhill, East St...", color: "#67e5d3", logo: <AggregateLogo /> },
  { name: "WSP", mail: "nein@wsp.dum..", jobs: 9, code: "SE1 9DP", place: "London SE1, UK", color: "#fb42a5", logo: <WspLogo /> },
  { name: "Speedy Services", mail: "sales@speedy..", jobs: 14, code: "WA10 6AD", place: "WA10 6AD, St Helens, Liver...", color: "#fd8bc2", logo: <SpeedyLogo /> },
  { name: "SGB CAPE", mail: "talha+9@arez..", jobs: 8, code: "WA1 2UT", place: "Warrington WA1, UK", color: "#9d2f9f", logo: <SgbLogo /> },
  { name: "Brandon Hire Station", mail: "hire.uk@bran..", jobs: 3, code: "BS32", place: "BS32 621, Park Avenue, Azt...", color: "#fbb193", logo: <BrandonLogo /> },
];

export default function App() {
  return (
    <Shell>
      <Global />
      <Sidebar>
        <SideTop>
          <LogoTile $size={57} $radius={12}><Mark size={53} /></LogoTile>
          <button aria-label="Collapse menu"><CollapseIcon /></button>
        </SideTop>
        <Nav>
          {navItems.map((n) => (
            <NavItem key={n.label} href="#" $active={n.active}>
              <NavIcon>{n.icon}</NavIcon>
              <NavLabel>{n.label}{n.beta && <Beta> Beta</Beta>}</NavLabel>
              {n.more && <ChevronRight size={12} />}
            </NavItem>
          ))}
        </Nav>
        <SideFoot>
          <LogoTile $size={30} $radius={10}><Mark size={19} /></LogoTile>
          <div><FootName>Arez.io</FootName>Version 23.01.26.1</div>
        </SideFoot>
        <ScrollThumb />
      </Sidebar>

      <Main>
        <Header>
          <PageHeading>
            <BackButton aria-label="Back"><FaArrowLeft size={10} /></BackButton>
            <Title>Service Partners (5)</Title>
          </PageHeading>
          <HeaderGroup $gap={20}>
            <DemoSign />
            <HeaderGroup $gap={7}>
              <Pill $tone="blue"><Plus size={14} />Lead</Pill>
              <Pill $tone="sand"><Plus size={14} />Compliance Ticket</Pill>
              <Pill $tone="green"><Plus size={14} />Work Order</Pill>
              <HeaderGroup $gap={4}>
                <IconButton $kind="brand" aria-label="Arez"><Mark size={16} mono /></IconButton>
                <IconButton $kind="plain" aria-label="Search"><Search size={13} /></IconButton>
                <IconButton aria-label="Tasks"><SquareCheck size={14} color="#262b2f" /></IconButton>
                <IconButton aria-label="Notifications"><FaBell size={14} /><Badge>2</Badge></IconButton>
                <IconButton aria-label="Information" $apart><FaInfo size={11} /></IconButton>
                <IconButton aria-label="Links"><FaLink size={12} /></IconButton>
              </HeaderGroup>
            </HeaderGroup>
          </HeaderGroup>
          <UserMark href="#" aria-label="Account"><Mark size={19} soft /></UserMark>
        </Header>

        <Toolbar>
          <SearchBox>
            <Search size={16} strokeWidth={1.5} aria-hidden="true" />
            <SearchInput type="text" placeholder="Search..." aria-label="Search partners" />
          </SearchBox>
          <ToolGroup>
            <SelectBox>
              <SelectLead><SortIcon /></SelectLead>
              <FilterSelect aria-label="Partner filter" defaultValue="all">
                <option value="all">All Service partner</option>
              </FilterSelect>
              <SelectChevron>
                <svg width="11" height="8" viewBox="0 0 11 8" fill="none" stroke="#04b184" strokeWidth="2.500" aria-hidden="true"><path d="M1 1l4.500 4.500L10 1" /></svg>
              </SelectChevron>
            </SelectBox>
            <ToolButton $look="outline">Supplier Onboarding Report</ToolButton>
            <Highlighted>
              <ToolButton $look="soft"><ChainIcon />Invite Partner</ToolButton>
              <ToolButton $look="solid"><Plus size={14} strokeWidth={3} />Add New Partner</ToolButton>
            </Highlighted>
          </ToolGroup>
        </Toolbar>

        <Content>
          <Table>
            <Head>
              <HeadRow>
                <HeadCell>PARTNER</HeadCell>
                <HeadCell>STATS</HeadCell>
                <HeadCell>LOCATION</HeadCell>
                <HeadCell $end>ACTIONS</HeadCell>
              </HeadRow>
            </Head>
            <Body>
              {partners.map((p, i) => (
                <Row key={p.name} $shade={i % 2 === 1}>
                  <Cell>
                    <Avatar>{p.logo}</Avatar>
                    <div>
                      <PartnerName>{p.name}</PartnerName>
                      <Muted $size={12} $line={16}>{p.mail}</Muted>
                      <Muted $size={12} $line={16}>Assigned jobs: {p.jobs}</Muted>
                    </div>
                  </Cell>
                  <Cell><SquareCheck size={19} color="#5cc24c" /><Approved>Approved</Approved></Cell>
                  <Cell>
                    <Dot $color={p.color} />
                    <div>
                      <Place>{p.code}</Place>
                      <Muted $size={13} $line={20}>{p.place}</Muted>
                    </div>
                  </Cell>
                  <Cell $end>
                    <MoreButton aria-label={"Actions for " + p.name}>
                      <svg width="4" height="16" viewBox="0 0 4 16" fill="#4d55c6" aria-hidden="true"><circle cx="2" cy="2" r="1.800" /><circle cx="2" cy="8" r="1.800" /><circle cx="2" cy="14" r="1.800" /></svg>
                    </MoreButton>
                  </Cell>
                </Row>
              ))}
            </Body>
          </Table>

          <MapPanel>
            <RegionMap />
            <ZoomControl>
              <ZoomButton aria-label="Zoom in"><svg width="12" height="12" viewBox="0 0 12 12" stroke="#000" strokeWidth="2"><path d="M6 0v12M0 6h12" /></svg></ZoomButton>
              <ZoomButton aria-label="Zoom out"><svg width="12" height="12" viewBox="0 0 12 12" stroke="#000" strokeWidth="2"><path d="M0 6h12" /></svg></ZoomButton>
            </ZoomControl>
            <MapSearch aria-label="Search map">
              <svg width="16" height="20" viewBox="0 0 16 20" fill="none" stroke="#000"><circle cx="7" cy="6" r="5" strokeWidth="2" /><path d="M9 11l4 7" strokeWidth="3" /></svg>
            </MapSearch>
            <Attribution>
              <svg width="10" height="7" viewBox="0 0 10 7" aria-hidden="true"><path d="M0 0h10v4H0z" fill="#4c7be1" /><path d="M0 4h10v3H0z" fill="#ffd500" /></svg>
              <AttributionLink href="#">Leaflet</AttributionLink>
              <span>| ©</span>
              <AttributionLink href="#">OpenStreetMap</AttributionLink>
            </Attribution>
          </MapPanel>
        </Content>
      </Main>
    </Shell>
  );
}
